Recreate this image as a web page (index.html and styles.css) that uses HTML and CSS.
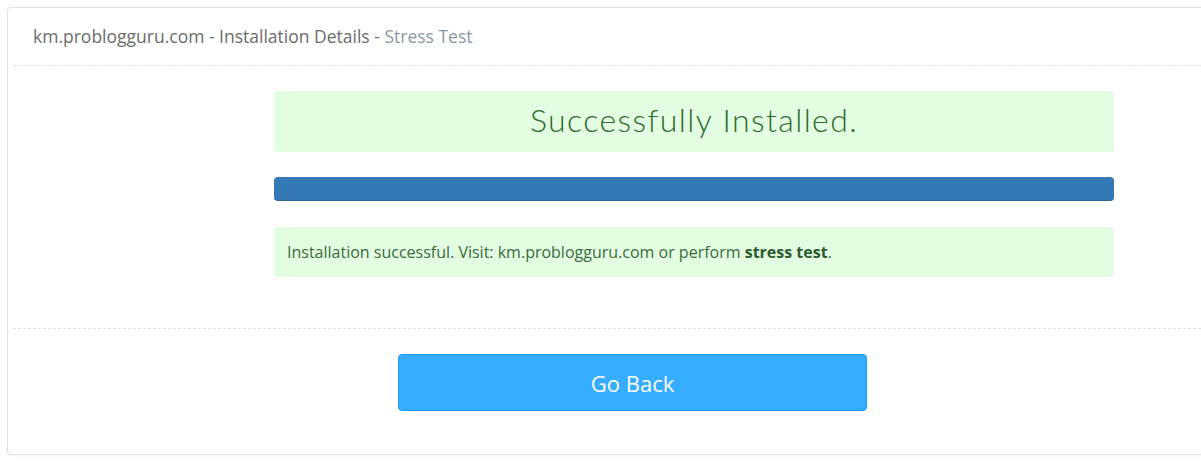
FILE: index.html
```html
<!DOCTYPE html>
<html lang="en">
<head>
    <meta charset="UTF-8">
    <title>Installation Details</title>
    <link rel="stylesheet" href="styles.css">
</head>
<body>

    <div class="panel">
        <div class="panel-heading">
            km.problogguru.com - Installation Details - <a href="#" class="crumb">Stress Test</a>
        </div>

        <div class="panel-body">
            <div class="col">
                <div class="alert-title">Successfully Installed.</div>
                <div class="progress"><div class="progress-bar"></div></div>
                <div class="alert">
                    Installation successful. Visit: km.problogguru.com or perform <strong>stress test</strong>.
                </div>
            </div>
        </div>

        <div class="panel-footer">
            <button class="btn-back">Go Back</button>
        </div>
    </div>

</body>
</html>
```

FILE: styles.css
```css
body {
    font-family: 'Open Sans', sans-serif;
    margin: 0;
    padding: 7px 0 7px 7px;
    background-color: #fff;
    color: #666;
}

/* card runs off the right side of the window */
.panel {
    padding: 0 0 0 5px;
    border: 1px solid #e1e6eb;
    border-right: none;
    border-radius: 4px 0 0 4px;
    box-shadow: 0 1px 2px rgba(0, 0, 0, 0.05);
    background-color: #fff;
}

.panel-heading {
    padding: 17px 20px 17px 20px;
    font-size: 17.5px;
    line-height: 23px;
    color: #6b6b6b;
    border-bottom: 1px dashed #e3e3e3;
}

.crumb {
    color: #8b98a6;
    text-decoration: none;
}

.panel-body {
    padding: 25px 0 51px 0;
    border-bottom: 1px dashed #e3e3e3;
}

.col {
    width: 840px;
    margin-left: 261px;
}

.alert-title {
    height: 61px;
    line-height: 58px;
    background-color: #e2fde1;
    border-radius: 4px;
    text-align: center;
    font-family: 'Lato', sans-serif;
    font-weight: 300;
    font-size: 32px;
    letter-spacing: 1.4px;
    color: #2f6a2f;
}

.progress {
    margin: 25px 0 26px 0;
    height: 24px;
}

.progress-bar {
    height: 100%;
    background-color: #337ab7;
    border-radius: 4px;
    box-shadow: inset 0 -1px 0 rgba(0, 0, 0, 0.15);
}

.alert {
    height: 50px;
    line-height: 50px;
    padding: 0 13px;
    background-color: #e2fde1;
    border-radius: 4px;
    font-size: 16px;
    color: #3c6a3d;
}

.alert strong {
    color: #2f5a30;
}

.panel-footer {
    padding: 25px 0 43px 385px;
}

.btn-back {
    display: block;
    width: 469px;
    height: 57px;
    background-color: #36adff;
    border: 1px solid #1a9cff;
    border-radius: 4px;
    color: #fff;
    font-family: 'Open Sans', sans-serif;
    font-size: 22px;
    cursor: pointer;
}
```
